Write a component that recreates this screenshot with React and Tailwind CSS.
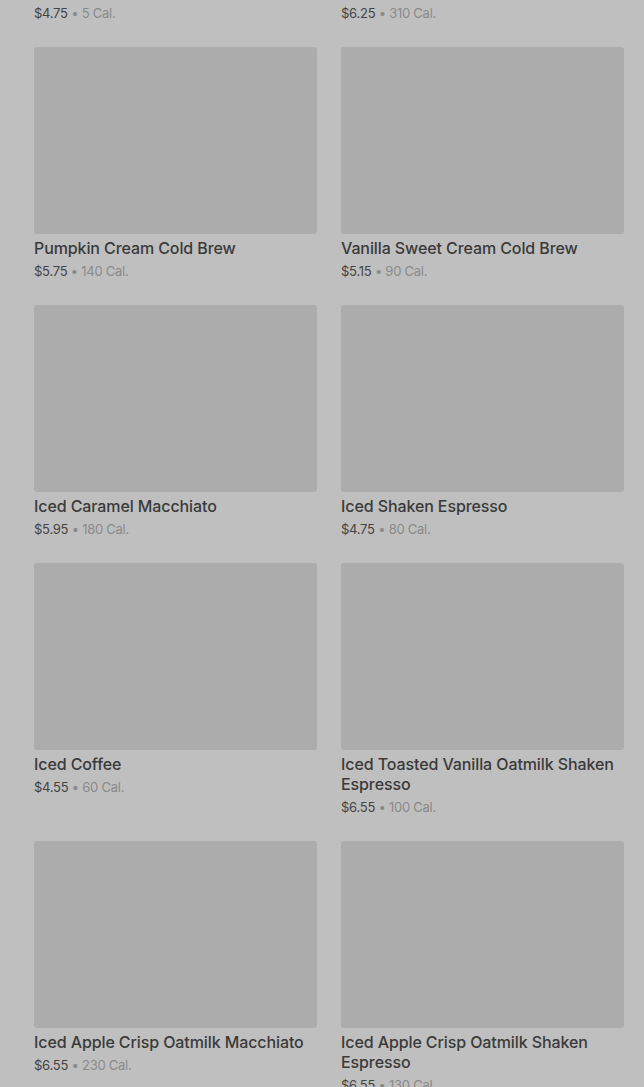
const items = [
  { name: "Starbucks® Cold Brew Coffee", price: "$4.75", cal: "5 Cal." },
  { name: "Iced Pumpkin Spice Latte", price: "$6.25", cal: "310 Cal." },
  { name: "Pumpkin Cream Cold Brew", price: "$5.75", cal: "140 Cal." },
  { name: "Vanilla Sweet Cream Cold Brew", price: "$5.15", cal: "90 Cal." },
  { name: "Iced Caramel Macchiato", price: "$5.95", cal: "180 Cal." },
  { name: "Iced Shaken Espresso", price: "$4.75", cal: "80 Cal." },
  { name: "Iced Coffee", price: "$4.55", cal: "60 Cal." },
  { name: "Iced Toasted Vanilla Oatmilk Shaken Espresso", price: "$6.55", cal: "100 Cal." },
  { name: "Iced Apple Crisp Oatmilk Macchiato", price: "$6.55", cal: "230 Cal." },
  { name: "Iced Apple Crisp Oatmilk Shaken Espresso", price: "$6.55", cal: "130 Cal." },
];

function ProductCard({ item }) {
  return (
    <div className="flex flex-col">
      <div className="h-[187px] w-full rounded-[3px] bg-[#acacac]" />
      <p className="mt-1 text-[16px] leading-[20px] font-medium tracking-[-0.1px] text-[#3a3a3a]">{item.name}</p>
      <p className="mt-1 text-[13px] leading-[18px] tracking-[-0.25px]">
        <span className="text-[#444]">{item.price}</span>
        <span className="text-[#8a8a8a]"> • {item.cal}</span>
      </p>
    </div>
  );
}

export default function App() {
  return (
    <div className="h-[1087px] w-[644px] overflow-hidden bg-[#bfbfbf]" style={{ fontFamily: "Inter, 'Noto Sans', sans-serif" }}>
      <div className="-mt-[211px] grid grid-cols-[283px_283px] gap-x-6 gap-y-[25px] pl-[34px]">
        {items.map((item) => (
          <ProductCard key={item.name} item={item} />
        ))}
      </div>
    </div>
  );
}
